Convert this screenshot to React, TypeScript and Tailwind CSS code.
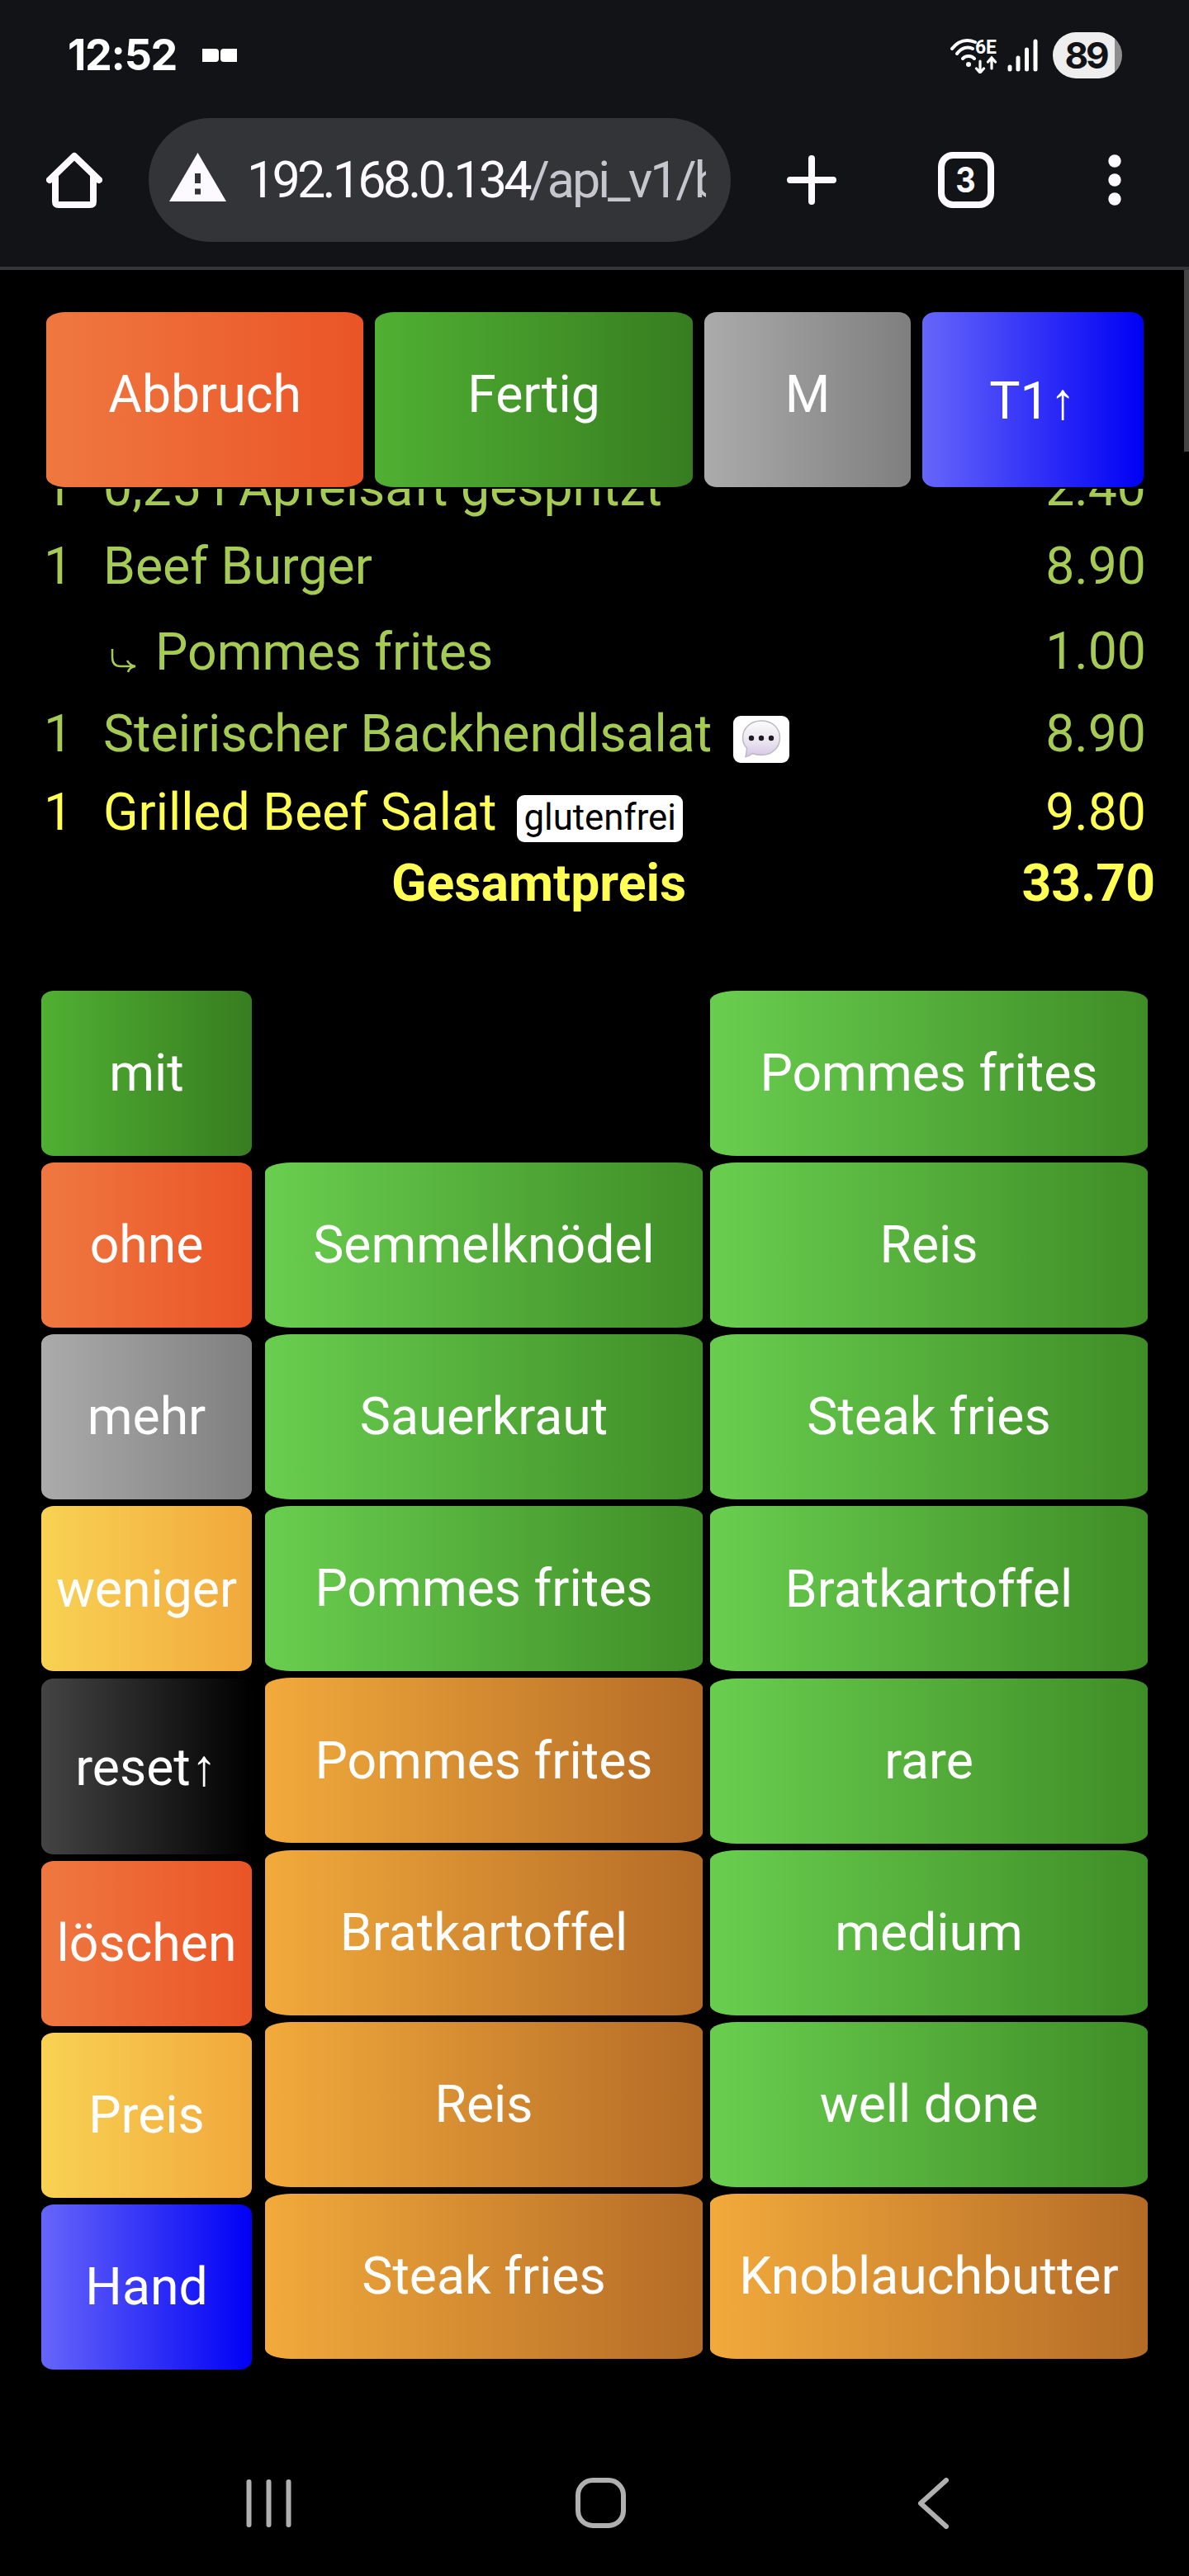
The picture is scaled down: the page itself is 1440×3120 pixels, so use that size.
import clsx from "clsx";
import type { ReactNode } from "react";

type Tone = "red" | "green" | "lime" | "gray" | "blue" | "yellow" | "orange" | "black";

const tones: Record<Tone, string> = {
  red: "from-[#ef7840] to-[#ea5427]",
  green: "from-[#50b033] to-[#377d20]",
  lime: "from-[#69ce4f] to-[#3f8d26]",
  gray: "from-[#ababab] to-[#7f7f7f]",
  blue: "from-[#6666fa] to-[#0000f5]",
  yellow: "from-[#f8d253] to-[#f1a83c]",
  orange: "from-[#f2aa3c] to-[#b46b26]",
  black: "from-[#444444] to-[#000000]",
};

interface KeyProps {
  tone: Tone;
  className?: string;
  children: ReactNode;
}

function Key({ tone, className, children }: KeyProps) {
  return (
    <button className={clsx("flex shrink-0 items-center justify-center rounded-[6%] bg-linear-to-r/srgb whitespace-nowrap text-white", tones[tone], className)}>
      {children}
    </button>
  );
}

function Up() {
  return <span className="w-[33px] text-center font-['Liberation_Sans',sans-serif] text-[62px] leading-none">↑</span>;
}

function StatusBar() {
  return (
    <div className="flex h-[134px] items-center justify-between pr-[81px] pl-[82px]">
      <div className="flex items-center gap-[31px]">
        <span className="font-['Inter',sans-serif] text-[52px] leading-none font-bold tracking-[-1.300px] text-white">12:52</span>
        <div className="flex gap-[2px]">
          <div className="h-4 w-5 rounded-r-sm bg-white" />
          <div className="h-4 w-5 rounded-l-sm bg-white" />
        </div>
      </div>
      <div className="flex items-center">
        <svg width="60" height="44" viewBox="0 0 60 44" fill="none" stroke="#fff" strokeWidth="4" strokeLinecap="round">
          <path d="M3 14C11 4 21 2 31 6M9 20C15 12 23 11 28 14M16 26C19 22 27 22 30 26" />
          <circle cx="23" cy="33" r="3" fill="#fff" stroke="none" />
          <path d="M37 29v13M32.500 38l4.500 5 4.500-5M51 38V25M46.500 30l4.500-5 4.500 5" strokeWidth="3.200" />
          <text x="31" y="20" fill="#fff" stroke="none" fontFamily="Roboto, sans-serif" fontWeight="700" fontSize="24" textLength="26" lengthAdjust="spacingAndGlyphs">6E</text>
        </svg>
        <svg className="ml-[10px]" width="37" height="40" viewBox="0 0 37 40" stroke="#fff" strokeWidth="5" strokeLinecap="round">
          <path d="M3 34v3M13 23v14M23.500 13v24M34 3v34" />
        </svg>
        <div className="ml-[18px] flex h-14 w-[84px] items-center justify-center rounded-[28px] bg-[linear-gradient(to_right,#eeeeee_75px,#8e8e8e_75px)] pr-1">
          <span className="font-['Inter',sans-serif] text-[44px] leading-none font-bold tracking-[-3px] text-[#121317]">89</span>
        </div>
      </div>
    </div>
  );
}

function Toolbar() {
  return (
    <div className="flex h-[168px] items-center">
      <svg className="ml-14" width="68" height="68" viewBox="0 0 68 68" fill="none" stroke="#fcf9ff" strokeWidth="8" strokeLinecap="round" strokeLinejoin="round">
        <path d="M4 34L34 5l30 29" />
        <path d="M11 30v30q0 4 4 4h38q4 0 4-4V30" />
      </svg>
      <div className="ml-14 flex h-[150px] w-[705px] items-center rounded-full bg-[#333438] pr-[30px] pl-[25px]">
        <svg className="-mt-2 shrink-0" width="69" height="59" viewBox="0 0 69 59">
          <path d="M34.500 0L69 59H0z" fill="#fcf9ff" />
          <path d="M31 25h7v12h-7zM31 43.500h7v7h-7z" fill="#333438" />
        </svg>
        <div className="ml-[25px] flex-1 overflow-hidden font-['Roboto',sans-serif] text-[61px] leading-[90px] tracking-[-3.800px] whitespace-nowrap text-[#fcf9ff]">
          192.168.0.134<span className="tracking-[-3px] text-[#c7c6cf]">/api_v1/b</span>
        </div>
      </div>
      <svg className="ml-[68px]" width="60" height="60" viewBox="0 0 60 60" stroke="#fcf9ff" strokeWidth="8" strokeLinecap="round">
        <path d="M30 4v52M4 30h52" />
      </svg>
      <div className="ml-[123px] flex h-[68px] w-[68px] items-center justify-center rounded-[18px] border-8 border-[#fcf9ff] font-['Inter',sans-serif] text-[42px] leading-none font-bold text-[#fcf9ff]">
        <span className="scale-x-90">3</span>
      </div>
      <svg className="ml-[138px]" width="16" height="62" viewBox="0 0 16 62" fill="#fcf9ff">
        <circle cx="8" cy="8" r="7.700" />
        <circle cx="8" cy="31" r="7.700" />
        <circle cx="8" cy="54" r="7.700" />
      </svg>
    </div>
  );
}

interface RowProps {
  qty?: string;
  price: string;
  className: string;
  children: ReactNode;
}

function OrderRow({ qty, price, className, children }: RowProps) {
  return (
    <div className={clsx("flex items-center leading-none whitespace-nowrap", className)}>
      <span className="w-[72px]">{qty}</span>
      <div className="flex flex-1 items-center">{children}</div>
      <span>{price}</span>
    </div>
  );
}

function CommentBadge() {
  return (
    <div className="mt-[11px] ml-[26px] flex h-[57px] w-[68px] items-center justify-center rounded-[9px] bg-white">
      <svg width="48" height="46" viewBox="0 0 48 46">
        <defs>
          <linearGradient id="bubble" x1="0" y1="0" x2="0" y2="1">
            <stop offset="0" stopColor="#fafafa" />
            <stop offset="0.55" stopColor="#ebe7ef" />
            <stop offset="1" stopColor="#d6c6e8" />
          </linearGradient>
        </defs>
        <path d="M24 1C11 1 1.500 10 1.500 21.500c0 5.500 2 9.500 5 12.500 0 4-.500 7-1.500 10.500 4-.500 6-2 8.500-4 3 1.500 6.500 2 10.500 2 13 0 22.500-9 22.500-21S37 1 24 1z" fill="url(#bubble)" stroke="#bdb9c1" strokeWidth="1.500" />
        <circle cx="12" cy="22" r="3.200" fill="#1f1a24" />
        <circle cx="24" cy="22" r="3.200" fill="#1f1a24" />
        <circle cx="36" cy="22" r="3.200" fill="#1f1a24" />
      </svg>
    </div>
  );
}

function OrderList() {
  return (
    <div className="mt-[2px] overflow-hidden pr-[52px] pl-[53px] text-[#a6cb55]">
      <OrderRow qty="1" price="2.40" className="-mt-[48px] h-[95px]">0,25 l Apfelsaft gespritzt</OrderRow>
      <OrderRow qty="1" price="8.90" className="h-[95px]">Beef Burger</OrderRow>
      <OrderRow price="1.00" className="h-[111px]">
        <svg className="mt-5 mr-[22px] ml-[8px]" width="33" height="30" viewBox="0 0 33 30" fill="none" stroke="currentColor" strokeWidth="2.500">
          <path d="M3 1v10q0 11 10 11h17M21 15q3 6 10 7q-7 1-9 7" />
        </svg>
        <span className="pt-[2px]">Pommes frites</span>
      </OrderRow>
      <OrderRow qty="1" price="8.90" className="h-[89px]">
        Steirischer Backhendlsalat
        <CommentBadge />
      </OrderRow>
      <OrderRow qty="1" price="9.80" className="h-[101px] text-[#ffff54]">
        Grilled Beef Salat
        <span className="mt-[13px] ml-[25px] flex h-[57px] items-center rounded-[9px] bg-white px-2 text-[43.750px] text-black">glutenfrei</span>
      </OrderRow>
      <div className="-mr-[11px] flex h-[70px] items-center justify-between pl-[421px] leading-none font-bold text-[#ffff54]">
        <span>Gesamtpreis</span>
        <span>33.70</span>
      </div>
    </div>
  );
}

const actions: { label: ReactNode; tone: Tone; tall?: boolean }[] = [
  { label: "mit", tone: "green" },
  { label: "ohne", tone: "red" },
  { label: "mehr", tone: "gray" },
  { label: "weniger", tone: "yellow" },
  { label: <>reset<Up /></>, tone: "black", tall: true },
  { label: "löschen", tone: "red" },
  { label: "Preis", tone: "yellow" },
  { label: "Hand", tone: "blue" },
];

const middle: [string, Tone][] = [
  ["Semmelknödel", "lime"],
  ["Sauerkraut", "lime"],
  ["Pommes frites", "lime"],
  ["Pommes frites", "orange"],
  ["Bratkartoffel", "orange"],
  ["Reis", "orange"],
  ["Steak fries", "orange"],
];

const right: [string, Tone][] = [
  ["Pommes frites", "lime"],
  ["Reis", "lime"],
  ["Steak fries", "lime"],
  ["Bratkartoffel", "lime"],
  ["rare", "lime"],
  ["medium", "lime"],
  ["well done", "lime"],
  ["Knoblauchbutter", "orange"],
];

function Column({ items, className }: { items: [string, Tone][]; className?: string }) {
  return (
    <div className={clsx("flex w-[530px] flex-col gap-[8.150px]", className)}>
      {items.map(([label, tone], i) => (
        <Key key={i} tone={tone} className="h-[200px]">{label}</Key>
      ))}
    </div>
  );
}

function NavBar() {
  return (
    <div className="mt-auto flex h-[177px] items-center pl-[298px]">
      <svg width="56" height="58" viewBox="0 0 56 58" stroke="#b0b0b0" strokeWidth="6" strokeLinecap="round">
        <path d="M3.500 3v52M27.500 3v52M51.500 3v52" />
      </svg>
      <div className="ml-[343px] h-[61px] w-[61px] rounded-[21px] border-6 border-[#b0b0b0]" />
      <svg className="ml-[353px]" width="39" height="62" viewBox="0 0 39 62" fill="none" stroke="#b0b0b0" strokeWidth="6" strokeLinecap="round" strokeLinejoin="round">
        <path d="M35 3L4 31l31 28" />
      </svg>
    </div>
  );
}

export default function App() {
  return (
    <div className="relative flex h-[3120px] w-[1440px] flex-col overflow-hidden bg-black font-['Roboto',sans-serif] text-[62.500px]">
      <header className="h-[327px] border-b-4 border-[#343439] bg-[#121317]">
        <StatusBar />
        <Toolbar />
      </header>
      <div className="absolute top-[327px] right-0 h-[220px] w-[6px] bg-[#444444]" />

      <div className="mt-[51px] flex h-[212px] gap-[14px] pl-14">
        <Key tone="red" className="w-[384px] pb-[13px]">Abbruch</Key>
        <Key tone="green" className="w-[385px] pb-[13px]">Fertig</Key>
        <Key tone="gray" className="w-[250px] pb-[13px]">M</Key>
        <Key tone="blue" className="w-[268px] pt-[4px]">T1<Up /></Key>
      </div>

      <OrderList />

      <div className="mt-[95px] flex pl-[50px]">
        <div className="flex w-[255px] flex-col gap-[8.150px]">
          {actions.map(({ label, tone, tall }, i) => (
            <Key key={i} tone={tone} className={tall ? "h-[213px] pt-[3px]" : "h-[200px]"}>{label}</Key>
          ))}
        </div>
        <Column items={middle} className="mt-[208px] ml-4" />
        <Column items={right} className="ml-[9px]" />
      </div>

      <NavBar />
    </div>
  );
}
